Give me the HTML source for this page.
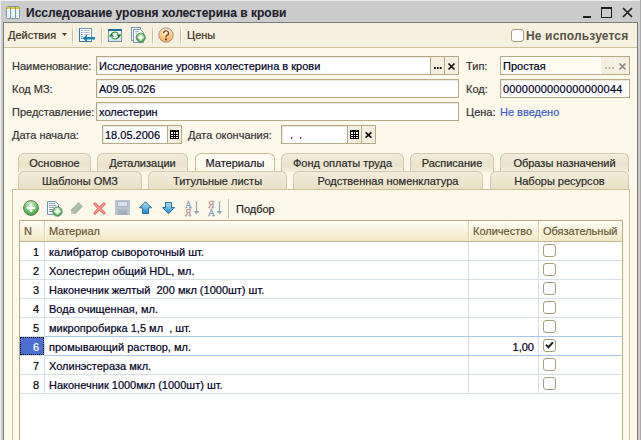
<!DOCTYPE html>
<html><head><meta charset="utf-8">
<style>
*{margin:0;padding:0;box-sizing:border-box}
html,body{width:641px;height:440px;overflow:hidden}
body{position:relative;background:#cccccc;font-family:"Liberation Sans",sans-serif;font-size:11px;color:#000;-webkit-text-stroke:0.2px currentColor}
.a{position:absolute;white-space:pre;line-height:1}
svg.a{overflow:visible;-webkit-text-stroke:0}
.lbl{position:absolute;white-space:pre;line-height:1;color:#333}
.v{position:absolute;white-space:pre;line-height:1;color:#00001e}
.inp{position:absolute;background:#fff;border:1px solid #b5a986;box-shadow:inset 1px 1px 0 #ece8dc}
.bt{position:absolute;background:#f4efdf}
.bs{position:absolute;width:1px;background:#b5a986}
.sep{position:absolute;width:1px;background:linear-gradient(rgba(200,188,150,0.2),#c9bd98 35%,#c9bd98 65%,rgba(200,188,150,0.2));box-shadow:1px 0 0 #fffdf6}
.tab{position:absolute;border:1px solid #d3c9aa;border-bottom:none;border-radius:6px 6px 0 0;text-align:center;color:#2a2a2a;line-height:1}
.r1{height:19px;padding-top:4px;background:linear-gradient(#f1ecdb,#ebe3ca 65%,#f3efe0)}
.r2{height:19px;padding-top:4px;background:linear-gradient(#f2ecda,#e8dfc4)}
.cb{position:absolute;width:13px;height:13px;border:1px solid #a89e7a;border-radius:3px;background:#fff}
.hl{position:absolute;height:1px}
.vl{position:absolute;width:1px}
</style></head><body>

<div class="a" style="left:0;top:0;width:641px;height:1px;background:#f0f0f0"></div>
<div class="a" style="left:0;top:0;width:1px;height:440px;background:#ececec"></div>
<div class="a" style="left:640px;top:0;width:1px;height:440px;background:#a9a9a9"></div>
<svg class="a" style="left:6px;top:6px" width="14" height="13" viewBox="0 0 14 13">
<rect x="0.5" y="0.5" width="13" height="12" rx="1" fill="#f4fafe" stroke="#7e97aa"/>
<rect x="1" y="1" width="12" height="2" fill="#f5c400"/>
<path d="M4.5 1V12M9.5 1V12" stroke="#7e97aa"/>
<path d="M2 4V11M6 4V11M11 4V11" stroke="#d8ecf8"/>
</svg>
<div class="a" style="left:26px;top:7px;font-size:12px;font-weight:bold;color:#20202a;-webkit-text-stroke:0.1px #20202a">Исследование уровня холестерина в крови</div>
<div class="a" style="left:583px;top:16px;width:8px;height:2px;background:#1e1e1e"></div>
<div class="a" style="left:601px;top:7px;width:11px;height:11px;border:1px solid #1e1e1e;border-top-width:2px"></div>
<svg class="a" style="left:622px;top:7px" width="11" height="11" viewBox="0 0 11 11"><path d="M1 1L10 10M10 1L1 10" stroke="#1e1e1e" stroke-width="1.7"/></svg>
<div class="a" style="left:3px;top:22px;width:635px;height:418px;border:1px solid #7a7a7a;border-bottom:none;background:#fcf8ea"></div>
<div class="a" style="left:4px;top:23px;width:633px;height:25px;background:#f6f0de;border-bottom:1px solid #cdc19c"></div>
<div class="a" style="left:8px;top:30px;color:#3a3020">Действия</div>
<svg class="a" style="left:62px;top:33px" width="5" height="3"><path d="M0 0H5L2.5 3Z" fill="#4a3a20"/></svg>
<div class="sep" style="left:72px;top:26px;height:19px"></div>
<svg class="a" style="left:76px;top:25px" width="24" height="20" viewBox="0 0 24 20">
<rect x="3.5" y="3.5" width="12" height="13" fill="#fbfdff" stroke="#6a98c0"/>
<path d="M3.5 3.5V16.5H15.5" stroke="#3f75a5" fill="none"/>
<path d="M5 5.5H6.5M5 7.5H6.5M5 9.5H6.5M5 11.5H6.5M5 13.5H6.5" stroke="#5a98c8"/>
<path d="M7.5 5.5H13.5M7.5 7.5H13.5M7.5 9.5H13.5" stroke="#b8bcc4"/>
<path d="M6.5 13.2L11 9.5V12H19V14.5H11V17.5Z" fill="#1a80b8"/>
</svg>
<div class="sep" style="left:101px;top:26px;height:19px"></div>
<svg class="a" style="left:104px;top:25px" width="20" height="20" viewBox="0 0 20 20">
<defs><linearGradient id="rg" x1="0" y1="0" x2="0" y2="1"><stop offset="0" stop-color="#ffffff"/><stop offset="1" stop-color="#cfe2f0"/></linearGradient></defs>
<rect x="4.5" y="4.5" width="13" height="12" fill="url(#rg)" stroke="#7893a8"/>
<rect x="4" y="4" width="14" height="2" fill="#1d6b9a"/>
<path d="M7.2 10.8A3.8 3.4 0 0 1 14.3 8.8" stroke="#2a922a" stroke-width="1.1" fill="none"/>
<path d="M14.8 10.2A3.8 3.4 0 0 1 7.7 12.2" stroke="#2a922a" stroke-width="1.1" fill="none"/>
<path d="M5 11.5L7.5 8.5L10 11.5Z" fill="#0a7a0a"/>
<path d="M12.5 9.5L17.5 9.5L15 12.5Z" fill="#0a7a0a"/>
</svg>
<svg class="a" style="left:128px;top:24px" width="20" height="20" viewBox="0 0 20 20">
<rect x="3.5" y="3.5" width="9" height="13" fill="#f4f7fa" stroke="#7a9ab4"/>
<path d="M5.5 5.5H12.5L15.5 8.5V18.5H5.5Z" fill="#fbfcfe" stroke="#7a9ab4"/>
<path d="M7.5 7.5H11M7.5 9.5H9" stroke="#a8b4c0"/>
<defs><radialGradient id="cg" cx="0.5" cy="0.3" r="0.7"><stop offset="0" stop-color="#a8e0a0"/><stop offset="1" stop-color="#38a038"/></radialGradient></defs>
<circle cx="12.7" cy="13.6" r="4.6" fill="url(#cg)" stroke="#5a7a5a" stroke-width="0.8"/>
<path d="M12.7 10.8V16.4M9.9 13.6H15.5" stroke="#fff" stroke-width="2"/>
</svg>
<div class="sep" style="left:152px;top:26px;height:19px"></div>
<svg class="a" style="left:154px;top:24px" width="24" height="22" viewBox="0 0 24 22">
<defs><radialGradient id="hg" cx="0.5" cy="0.25" r="0.8"><stop offset="0" stop-color="#fff6e8"/><stop offset="0.55" stop-color="#ffcc88"/><stop offset="1" stop-color="#f5a444"/></radialGradient></defs>
<circle cx="12" cy="11" r="7.2" fill="url(#hg)" stroke="#9a8c84" stroke-width="0.9"/>
<path d="M9.6 9.2A2.5 2.3 0 1 1 12.6 11.4C12 11.8 12 12.4 12 13.4" stroke="#7a4a22" stroke-width="1.4" fill="none"/>
<rect x="11" y="14.5" width="2" height="1.8" fill="#7a4a22"/>
</svg>
<div class="sep" style="left:180px;top:26px;height:19px"></div>
<div class="a" style="left:187px;top:30px;color:#3a3020">Цены</div>
<div class="cb" style="left:511px;top:29px"></div>
<div class="a" style="left:526px;top:30px;font-size:12px;font-weight:bold;color:#5a5248;letter-spacing:0.15px;-webkit-text-stroke:0">Не используется</div>
<div class="lbl" style="left:12px;top:61px">Наименование:</div>
<div class="inp" style="left:96px;top:56px;width:363px;height:19px"></div>
<div class="v" style="left:99px;top:61px">Исследование уровня холестерина в крови</div>
<div class="bt" style="left:431px;top:57px;width:27px;height:17px"></div>
<div class="bs" style="left:430px;top:57px;height:17px"></div>
<div class="bs" style="left:444px;top:57px;height:17px"></div>
<svg class="a" style="left:434px;top:67px" width="9" height="2"><rect x="0" y="0" width="1.8" height="2" fill="#111"/><rect x="2.9" y="0" width="1.8" height="2" fill="#111"/><rect x="5.8" y="0" width="1.8" height="2" fill="#111"/></svg>
<svg class="a" style="left:448px;top:63px" width="7" height="7" viewBox="0 0 7 7"><path d="M0.5 0.5L6.5 6.5M6.5 0.5L0.5 6.5" stroke="#111" stroke-width="1.65"/></svg>
<div class="lbl" style="left:12px;top:84px">Код МЗ:</div>
<div class="inp" style="left:96px;top:79px;width:363px;height:19px"></div>
<div class="v" style="left:99px;top:84px">A09.05.026</div>
<div class="lbl" style="left:12px;top:107px">Представление:</div>
<div class="inp" style="left:96px;top:102px;width:363px;height:19px"></div>
<div class="v" style="left:99px;top:107px">холестерин</div>
<div class="lbl" style="left:12px;top:130px">Дата начала:</div>
<div class="inp" style="left:102px;top:125px;width:80px;height:19px"></div>
<div class="v" style="left:105px;top:130px">18.05.2006</div>
<div class="bt" style="left:168px;top:126px;width:13px;height:17px"></div>
<div class="bs" style="left:167px;top:126px;height:17px"></div>
<svg class="a" style="left:170px;top:130px" width="9" height="9" viewBox="0 0 9 9">
<rect x="0" y="0" width="9" height="9" fill="#000"/><rect x="1" y="2" width="7" height="6" fill="#fff"/>
<rect x="1" y="0" width="1" height="1" fill="#666"/><rect x="6" y="0" width="1" height="1" fill="#666"/>
<rect x="3" y="2" width="1" height="6" fill="#000"/><rect x="5" y="2" width="1" height="6" fill="#000"/>
<rect x="1" y="4" width="7" height="1" fill="#000"/><rect x="1" y="6" width="7" height="1" fill="#000"/></svg>
<div class="lbl" style="left:188px;top:130px">Дата окончания:</div>
<div class="inp" style="left:281px;top:125px;width:95px;height:19px"></div>
<svg class="a" style="left:291px;top:137px" width="12" height="2"><rect x="0" y="0" width="1.3" height="1.6" fill="#302060"/><rect x="9" y="0" width="1.3" height="1.6" fill="#302060"/></svg>
<div class="bt" style="left:348px;top:126px;width:27px;height:17px"></div>
<div class="bs" style="left:347px;top:126px;height:17px"></div>
<div class="bs" style="left:361px;top:126px;height:17px"></div>
<svg class="a" style="left:350px;top:130px" width="9" height="9" viewBox="0 0 9 9">
<rect x="0" y="0" width="9" height="9" fill="#000"/><rect x="1" y="2" width="7" height="6" fill="#fff"/>
<rect x="1" y="0" width="1" height="1" fill="#666"/><rect x="6" y="0" width="1" height="1" fill="#666"/>
<rect x="3" y="2" width="1" height="6" fill="#000"/><rect x="5" y="2" width="1" height="6" fill="#000"/>
<rect x="1" y="4" width="7" height="1" fill="#000"/><rect x="1" y="6" width="7" height="1" fill="#000"/></svg>
<svg class="a" style="left:365px;top:132px" width="7" height="6" viewBox="0 0 7 6"><path d="M0.6 0.4L6.4 5.6M6.4 0.4L0.6 5.6" stroke="#111" stroke-width="1.7"/></svg>
<div class="lbl" style="left:466px;top:61px">Тип:</div>
<div class="inp" style="left:500px;top:56px;width:130px;height:19px;background:#f4efdf;box-shadow:none"></div>
<div class="a" style="left:501px;top:57px;width:100px;height:17px;background:#fdfaf0;border:2px solid #fff"></div>
<div class="a" style="left:615px;top:57px;width:1px;height:17px;background:#fbf6e4"></div>
<div class="v" style="left:503px;top:61px">Простая</div>
<svg class="a" style="left:604.5px;top:67px" width="9" height="2"><rect x="0.2" y="0.2" width="1.6" height="1.6" fill="#9a9a9a"/><rect x="3.7" y="0.2" width="1.6" height="1.6" fill="#9a9a9a"/><rect x="7.2" y="0.2" width="1.6" height="1.6" fill="#9a9a9a"/></svg>
<svg class="a" style="left:619px;top:63px" width="7" height="7" viewBox="0 0 7 7"><path d="M0.5 0.5L6.5 6.5M6.5 0.5L0.5 6.5" stroke="#888" stroke-width="1.6"/></svg>
<div class="lbl" style="left:466px;top:84px">Код:</div>
<div class="inp" style="left:500px;top:79px;width:130px;height:19px"></div>
<div class="v" style="left:503px;top:84px;letter-spacing:0.17px">0000000000000000044</div>
<div class="lbl" style="left:466px;top:107px">Цена:</div>
<div class="a" style="left:500px;top:107px;color:#3a5ec8">Не введено</div>
<div class="tab r1" style="left:18px;top:153px;width:73px">Основное</div>
<div class="tab r1" style="left:97px;top:153px;width:91px">Детализации</div>
<div class="tab r1" style="left:195px;top:153px;width:80px;border-color:#c9bb90;background:linear-gradient(#fdfbf3,#fcf8ea);color:#1a1a2a">Материалы</div>
<div class="tab r1" style="left:281px;top:153px;width:123px">Фонд оплаты труда</div>
<div class="tab r1" style="left:410px;top:153px;width:84px">Расписание</div>
<div class="tab r1" style="left:500px;top:153px;width:129px">Образы назначений</div>
<div class="tab r2" style="left:18px;top:171px;width:124px">Шаблоны ОМЗ</div>
<div class="tab r2" style="left:148px;top:171px;width:139px">Титульные листы</div>
<div class="tab r2" style="left:293px;top:171px;width:190px">Родственная номенклатура</div>
<div class="tab r2" style="left:490px;top:171px;width:139px">Наборы ресурсов</div>
<div class="a" style="left:12px;top:189px;width:618px;height:251px;border:1px solid #cdc19c;border-bottom:none;background:#fcf8ea"></div>
<svg class="a" style="left:22px;top:199px" width="18" height="18" viewBox="0 0 18 18">
<defs><radialGradient id="gg" cx="0.45" cy="0.25" r="0.8"><stop offset="0" stop-color="#d0f2c8"/><stop offset="0.55" stop-color="#6cc468"/><stop offset="1" stop-color="#38a03a"/></radialGradient></defs>
<circle cx="9" cy="9" r="7.4" fill="url(#gg)" stroke="#5a6e5a" stroke-width="0.9"/>
<path d="M9 4.8V13.2M4.8 9H13.2" stroke="#fff" stroke-width="2.6"/>
</svg>
<svg class="a" style="left:46px;top:200px" width="18" height="18" viewBox="0 0 18 18">
<path d="M1.5 1.5H9.5L12.5 4.5V14.5H1.5Z" fill="#f6f9fc" stroke="#6f96b8"/>
<path d="M3 3.5H9M3 5.5H10M3 7.5H8M3 9.5H7M3 11.5H7" stroke="#8fa3b8"/>
<defs><radialGradient id="gg2" cx="0.45" cy="0.25" r="0.8"><stop offset="0" stop-color="#b8eab0"/><stop offset="1" stop-color="#36a036"/></radialGradient></defs>
<circle cx="11.5" cy="11.5" r="4.7" fill="url(#gg2)" stroke="#4a704a" stroke-width="0.8"/>
<path d="M11.5 8.5V14.5M8.5 11.5H14.5" stroke="#fff" stroke-width="2"/>
</svg>
<svg class="a" style="left:70px;top:201px" width="14" height="14" viewBox="0 0 14 14"><path d="M1 13V8.5L8.6 1L13 5.4L5.5 13Z" fill="#a9b9a8"/><path d="M3 10.5L9.5 4" stroke="#c4d0c2" stroke-width="1"/><path d="M1 13V9.5L4.5 13Z" fill="#c8d4c6"/></svg>
<svg class="a" style="left:93px;top:202px" width="13" height="13" viewBox="0 0 13 13"><path d="M2 2L11 11M11 2L2 11" stroke="#ea5050" stroke-width="3" stroke-linecap="round"/><path d="M2 2L11 11M11 2L2 11" stroke="#ffa89c" stroke-width="1.2" stroke-linecap="round"/></svg>
<svg class="a" style="left:115px;top:200px" width="15" height="15" viewBox="0 0 15 15">
<rect x="0" y="0" width="15" height="15" fill="#b9c5d0"/><rect x="2.5" y="1.5" width="10" height="5" fill="#d9e2ea" stroke="#a9b6c2"/>
<rect x="3" y="9" width="9" height="6" fill="#aab6c2"/><text x="4" y="14.5" font-size="6" font-family="Liberation Sans" font-weight="bold" fill="#9aa6b2">OK</text></svg>
<svg class="a" style="left:139px;top:201px" width="14" height="14" viewBox="0 0 14 14">
<defs><linearGradient id="ag" x1="0" y1="0" x2="0" y2="1"><stop offset="0" stop-color="#a8e4fa"/><stop offset="1" stop-color="#1a8ccc"/></linearGradient></defs>
<path d="M6.5 0.8L12.5 6.8H9.5V12.5H3.5V6.8H0.5Z" fill="url(#ag)" stroke="#1f5f8f" stroke-width="0.9" stroke-linejoin="round"/></svg>
<svg class="a" style="left:162px;top:202px" width="14" height="14" viewBox="0 0 14 14">
<defs><linearGradient id="ag2" x1="0" y1="0" x2="0" y2="1"><stop offset="0" stop-color="#a8e4fa"/><stop offset="1" stop-color="#1a8ccc"/></linearGradient></defs>
<path d="M6.5 11.8L12.5 5.5H9.5V0.5H3.5V5.5H0.5Z" fill="url(#ag2)" stroke="#1f5f8f" stroke-width="0.9" stroke-linejoin="round"/></svg>
<svg class="a" style="left:185px;top:200px" width="16" height="17" viewBox="0 0 16 17">
<text x="0" y="8" font-size="9.5" font-family="Liberation Serif" fill="#8fa6ba" stroke="#8fa6ba" stroke-width="0.3">A</text>
<text x="0" y="16" font-size="9.5" font-family="Liberation Serif" fill="#b8959c" stroke="#b8959c" stroke-width="0.3">Я</text>
<path d="M11.5 1V14" stroke="#98acbe" stroke-width="1.2"/><path d="M8.5 11H14.5L11.5 14.5Z" fill="#98acbe"/></svg>
<svg class="a" style="left:208px;top:200px" width="16" height="17" viewBox="0 0 16 17">
<text x="0" y="8" font-size="9.5" font-family="Liberation Serif" fill="#b8959c" stroke="#b8959c" stroke-width="0.3">Я</text>
<text x="0" y="16" font-size="9.5" font-family="Liberation Serif" fill="#8fa6ba" stroke="#8fa6ba" stroke-width="0.3">A</text>
<path d="M11.5 1V14" stroke="#98acbe" stroke-width="1.2"/><path d="M8.5 11H14.5L11.5 14.5Z" fill="#98acbe"/></svg>
<div class="sep" style="left:228px;top:199px;height:19px;background:#cfc39c"></div>
<div class="a" style="left:236px;top:204px;color:#222">Подбор</div>
<div class="a" style="left:19px;top:220px;width:604px;height:220px;border:1px solid #b9ab82;border-bottom:none;background:#fff"></div>
<div class="a" style="left:20px;top:221px;width:602px;height:21px;background:linear-gradient(#fefcf4,#f2e7c5);border-bottom:1px solid #c6b78e"></div>
<div class="vl" style="left:44px;top:221px;height:20px;background:#ddd1ae"></div>
<div class="vl" style="left:45px;top:221px;height:20px;background:#fffbee"></div>
<div class="vl" style="left:468px;top:221px;height:20px;background:#ddd1ae"></div>
<div class="vl" style="left:469px;top:221px;height:20px;background:#fffbee"></div>
<div class="vl" style="left:538px;top:221px;height:20px;background:#ddd1ae"></div>
<div class="vl" style="left:539px;top:221px;height:20px;background:#fffbee"></div>
<div class="a" style="left:24px;top:226px;color:#6a5830">N</div>
<div class="a" style="left:49px;top:226px;color:#6a5830">Материал</div>
<div class="a" style="left:473px;top:226px;color:#6a5830">Количество</div>
<div class="a" style="left:543px;top:226px;color:#6a5830">Обязательный</div>
<div class="hl" style="left:20px;top:260px;width:602px;background:#d6dee6"></div>
<div class="vl" style="left:44px;top:242px;height:18px;background:#d6dee6"></div>
<div class="vl" style="left:468px;top:242px;height:18px;background:#d6dee6"></div>
<div class="vl" style="left:538px;top:242px;height:18px;background:#d6dee6"></div>
<div class="a" style="left:20px;top:247px;width:19px;text-align:right;color:#000">1</div>
<div class="v" style="left:49px;top:247px">калибратор сывороточный шт.</div>
<div class="cb" style="left:543px;top:244px"></div>
<div class="hl" style="left:20px;top:279px;width:602px;background:#d6dee6"></div>
<div class="vl" style="left:44px;top:261px;height:18px;background:#d6dee6"></div>
<div class="vl" style="left:468px;top:261px;height:18px;background:#d6dee6"></div>
<div class="vl" style="left:538px;top:261px;height:18px;background:#d6dee6"></div>
<div class="a" style="left:20px;top:266px;width:19px;text-align:right;color:#000">2</div>
<div class="v" style="left:49px;top:266px">Холестерин общий HDL, мл.</div>
<div class="cb" style="left:543px;top:263px"></div>
<div class="hl" style="left:20px;top:298px;width:602px;background:#d6dee6"></div>
<div class="vl" style="left:44px;top:280px;height:18px;background:#d6dee6"></div>
<div class="vl" style="left:468px;top:280px;height:18px;background:#d6dee6"></div>
<div class="vl" style="left:538px;top:280px;height:18px;background:#d6dee6"></div>
<div class="a" style="left:20px;top:285px;width:19px;text-align:right;color:#000">3</div>
<div class="v" style="left:49px;top:285px">Наконечник желтый  200 мкл (1000шт) шт.</div>
<div class="cb" style="left:543px;top:282px"></div>
<div class="hl" style="left:20px;top:317px;width:602px;background:#d6dee6"></div>
<div class="vl" style="left:44px;top:299px;height:18px;background:#d6dee6"></div>
<div class="vl" style="left:468px;top:299px;height:18px;background:#d6dee6"></div>
<div class="vl" style="left:538px;top:299px;height:18px;background:#d6dee6"></div>
<div class="a" style="left:20px;top:304px;width:19px;text-align:right;color:#000">4</div>
<div class="v" style="left:49px;top:304px">Вода очищенная, мл.</div>
<div class="cb" style="left:543px;top:301px"></div>
<div class="hl" style="left:20px;top:336px;width:602px;background:#d6dee6"></div>
<div class="vl" style="left:44px;top:318px;height:18px;background:#d6dee6"></div>
<div class="vl" style="left:468px;top:318px;height:18px;background:#d6dee6"></div>
<div class="vl" style="left:538px;top:318px;height:18px;background:#d6dee6"></div>
<div class="a" style="left:20px;top:323px;width:19px;text-align:right;color:#000">5</div>
<div class="v" style="left:49px;top:323px">микропробирка 1,5 мл  , шт.</div>
<div class="cb" style="left:543px;top:320px"></div>
<div class="hl" style="left:20px;top:355px;width:602px;background:#d6dee6"></div>
<div class="vl" style="left:44px;top:337px;height:18px;background:#d6dee6"></div>
<div class="vl" style="left:468px;top:337px;height:18px;background:#d6dee6"></div>
<div class="vl" style="left:538px;top:337px;height:18px;background:#d6dee6"></div>
<div class="hl" style="left:45px;top:336px;width:577px;background:#a9c5e8"></div>
<div class="hl" style="left:45px;top:355px;width:577px;background:#a9c5e8"></div>
<div class="a" style="left:20px;top:337px;width:24px;height:18px;background:#4a6fcf;border:1px dotted #000"></div>
<div class="a" style="left:20px;top:342px;width:19px;text-align:right;color:#fff">6</div>
<div class="v" style="left:49px;top:342px">промывающий раствор, мл.</div>
<div class="cb" style="left:543px;top:339px"></div>
<div class="v" style="left:468px;top:342px;width:66px;text-align:right">1,00</div>
<svg class="a" style="left:545px;top:341px" width="9" height="8" viewBox="0 0 9 8"><path d="M1 3.8L3.4 6.2L8 1.2" stroke="#262626" stroke-width="2" fill="none"/></svg>
<div class="hl" style="left:20px;top:374px;width:602px;background:#d6dee6"></div>
<div class="vl" style="left:44px;top:356px;height:18px;background:#d6dee6"></div>
<div class="vl" style="left:468px;top:356px;height:18px;background:#d6dee6"></div>
<div class="vl" style="left:538px;top:356px;height:18px;background:#d6dee6"></div>
<div class="a" style="left:20px;top:361px;width:19px;text-align:right;color:#000">7</div>
<div class="v" style="left:49px;top:361px">Холинэстераза мкл.</div>
<div class="cb" style="left:543px;top:358px"></div>
<div class="hl" style="left:20px;top:393px;width:602px;background:#d6dee6"></div>
<div class="vl" style="left:44px;top:375px;height:18px;background:#d6dee6"></div>
<div class="vl" style="left:468px;top:375px;height:18px;background:#d6dee6"></div>
<div class="vl" style="left:538px;top:375px;height:18px;background:#d6dee6"></div>
<div class="a" style="left:20px;top:380px;width:19px;text-align:right;color:#000">8</div>
<div class="v" style="left:49px;top:380px">Наконечник 1000мкл (1000шт) шт.</div>
<div class="cb" style="left:543px;top:377px"></div>
</body></html>
